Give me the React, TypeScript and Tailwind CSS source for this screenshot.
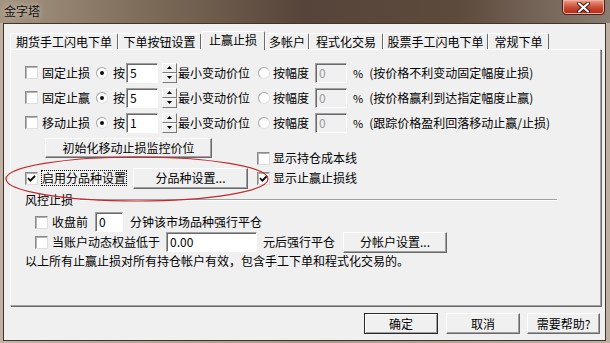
import React from 'react';

const Check: React.FC<{ checked?: boolean; className?: string }> = ({ checked, className = '' }) => (
  <span
    className={`flex h-[13px] w-[13px] shrink-0 items-center justify-center border border-t-[#8a8a8a] border-l-[#8a8a8a] border-b-[#dedede] border-r-[#dedede] bg-white shadow-[inset_1px_1px_0_#b4b4b4] ${className}`}
  >
    {checked && (
      <svg width="9" height="9" viewBox="0 0 9 9">
        <path d="M1 4.2 L3.4 6.6 L8 1.8" stroke="#000" strokeWidth="1.8" fill="none" />
      </svg>
    )}
  </span>
);

const Radio: React.FC<{ on?: boolean; className?: string }> = ({ on, className = '' }) => (
  <span
    className={`flex h-[12px] w-[12px] shrink-0 items-center justify-center rounded-full border border-[#a4a4a4] border-b-[#e2e2e2] border-r-[#e2e2e2] bg-white ${className}`}
  >
    {on && <span className="h-[4px] w-[4px] rounded-full bg-[#111]" />}
  </span>
);

const Field: React.FC<{ value: string; className?: string; disabled?: boolean }> = ({ value, className = '', disabled }) => (
  <span
    className={`flex h-[20px] shrink-0 items-center border border-t-[#a0a0a0] border-l-[#a0a0a0] border-b-white border-r-white pl-[3px] shadow-[inset_1px_1px_0_#696969] ${
      disabled ? 'bg-[#f0f0f0] text-[#9a9a9a]' : 'bg-white text-black'
    } ${className}`}
  >
    {value}
  </span>
);

const Spin: React.FC = () => (
  <span className="ml-[4px] flex h-[20px] w-[15px] shrink-0 flex-col">
    <span className="flex h-[10px] items-center justify-center border border-t-white border-l-white border-b-[#7a7a7a] border-r-[#7a7a7a] bg-[#f0f0f0]">
      <svg width="5" height="3" viewBox="0 0 5 3">
        <path d="M0 3h5L2.5 0z" fill="#000" />
      </svg>
    </span>
    <span className="flex h-[10px] items-center justify-center border border-t-white border-l-white border-b-[#7a7a7a] border-r-[#7a7a7a] bg-[#f0f0f0]">
      <svg width="5" height="3" viewBox="0 0 5 3">
        <path d="M0 0h5L2.5 3z" fill="#000" />
      </svg>
    </span>
  </span>
);

const Btn: React.FC<{ children: React.ReactNode; className?: string; primary?: boolean }> = ({ children, className = '', primary }) => (
  <span
    className={`flex shrink-0 items-center justify-center bg-[#f0f0f0] ${
      primary
        ? 'border border-[#2a2a2a] shadow-[inset_1px_1px_0_#fff,inset_-1px_-1px_0_#a0a0a0]'
        : 'border border-t-white border-l-white border-b-[#696969] border-r-[#696969] shadow-[inset_-1px_-1px_0_#a0a0a0]'
    } ${className}`}
  >
    {children}
  </span>
);

type StopRow = { label: string; value: string; note: string };

const stopRows: StopRow[] = [
  { label: '固定止损', value: '5', note: '(按价格不利变动固定幅度止损)' },
  { label: '固定止赢', value: '5', note: '(按价格赢利到达指定幅度止赢)' },
  { label: '移动止损', value: '1', note: '(跟踪价格盈利回落移动止赢/止损)' },
];

const tabs = [
  { label: '期货手工闪电下单', w: 'w-[108px]' },
  { label: '下单按钮设置', w: 'w-[83px]' },
  { label: '止赢止损', w: 'w-[64px]', active: true },
  { label: '多帐户', w: 'w-[44px]' },
  { label: '程式化交易', w: 'w-[74px]' },
  { label: '股票手工闪电下单', w: 'w-[105px]' },
  { label: '常规下单', w: 'w-[61px]' },
];

export default function App() {
  return (
    <div className="relative h-[343px] w-[610px] overflow-hidden bg-[linear-gradient(90deg,#c2b2a1,#ab9a88_50%,#bdb0a3)] font-['Noto_Sans_CJK_SC','Noto_Sans',sans-serif] text-[12px] leading-[16px] text-black">
      {/* title bar */}
      <div className="flex h-[23px] items-start justify-between bg-[linear-gradient(90deg,#a49482,#7c6a58_25%,#56443a_50%,#5c4a3c_75%,#8a7c70)]">
        <span className="pl-[4px] pt-[3px] text-[#111] [text-shadow:0_0_6px_#e8dccc]">金字塔</span>
        <span className="mr-[5px] mt-[-1px] flex h-[16px] w-[43px] items-center justify-center rounded-b-[4px] border border-[#4e1e16] bg-[linear-gradient(#eaa392,#cf4c34_50%,#a9291a)] shadow-[inset_0_0_0_1px_#f0b0a0]">
          <svg width="13" height="11" viewBox="0 0 13 11">
            <path d="M2 1.5 L11 9.5 M11 1.5 L2 9.5" stroke="#3a1410" strokeWidth="4" strokeLinecap="round" />
            <path d="M2 1.5 L11 9.5 M11 1.5 L2 9.5" stroke="#fff" strokeWidth="2.2" strokeLinecap="round" />
          </svg>
        </span>
      </div>

      {/* dialog body */}
      <div className="ml-[3px] h-[318px] w-[603px] border border-[#3e352d] bg-[#f0f0f0] pl-[6px] pt-[7px]">
        <div className="relative z-10 flex h-[18px] items-end">
          {tabs.map((t) =>
            t.active ? (
              <span
                key={t.label}
                className={`mb-[-1px] flex h-[19px] items-center justify-center rounded-t-[2px] border border-b-0 border-t-white border-l-white border-r-[#696969] bg-[#f0f0f0] pb-[2px] ${t.w}`}
              >
                {t.label}
              </span>
            ) : (
              <span
                key={t.label}
                className={`flex h-[16px] items-center justify-center rounded-t-[2px] border border-b-0 border-t-white border-l-white border-r-[#696969] bg-[#f0f0f0] ${t.w}`}
              >
                {t.label}
              </span>
            ),
          )}
        </div>

        <div className="h-[257px] w-[591px] border border-t-white border-l-white border-b-[#a0a0a0] border-r-[#a0a0a0] pl-[14px] pt-[10px] shadow-[1px_1px_0_#696969]">
          {stopRows.map((r) => (
            <div key={r.label} className="flex h-[25px] items-center whitespace-nowrap">
              <Check />
              <span className="ml-[4px] w-[48px]">{r.label}</span>
              <Radio on className="ml-[6px]" />
              <span className="ml-[5px] w-[12px]">按</span>
              <Field value={r.value} className="ml-[1px] w-[32px]" />
              <Spin />
              <span className="ml-[1px] w-[72px]">最小变动价位</span>
              <Radio className="ml-[8px]" />
              <span className="ml-[3px] w-[36px]">按幅度</span>
              <Field value="0" disabled className="ml-[6px] w-[32px]" />
              <span className="ml-[6px] text-[11px]">%</span>
              <span className="ml-[6px]">{r.note}</span>
            </div>
          ))}

          <div className="flex">
            <div className="w-[232px]">
              <Btn className="ml-[20px] mt-[3px] h-[20px] w-[167px]">初始化移动止损监控价位</Btn>
              <div className="mt-[9px] flex h-[22px] items-center whitespace-nowrap">
                <Check checked />
                <span className="ml-[3px] border border-dotted border-black leading-[14px]">启用分品种设置</span>
                <Btn className="ml-[6px] h-[21px] w-[115px]">分品种设置...</Btn>
              </div>
            </div>
            <div className="pt-[15px]">
              <div className="flex h-[16px] items-center">
                <Check />
                <span className="ml-[3px]">显示持仓成本线</span>
              </div>
              <div className="mt-[4px] flex h-[16px] items-center">
                <Check checked />
                <span className="ml-[3px]">显示止赢止损线</span>
              </div>
            </div>
          </div>

          <div className="mt-[3px] flex h-[16px] items-center">
            <span className="w-[48px]">风控止损</span>
            <span className="ml-[7px] w-[477px] border-t border-b border-t-[#a0a0a0] border-b-white" />
          </div>

          <div className="mt-[4px] flex h-[20px] items-center whitespace-nowrap pl-[10px]">
            <Check />
            <span className="ml-[4px] w-[36px]">收盘前</span>
            <Field value="0" className="ml-[7px] w-[28px]" />
            <span className="ml-[7px]">分钟该市场品种强行平仓</span>
          </div>
          <div className="flex h-[20px] items-center whitespace-nowrap pl-[10px]">
            <Check />
            <span className="ml-[4px] w-[108px]">当账户动态权益低于</span>
            <Field value="0.00" className="ml-[6px] w-[91px]" />
            <span className="ml-[6px] w-[72px]">元后强行平仓</span>
            <Btn className="ml-[8px] h-[21px] w-[104px]">分帐户设置...</Btn>
          </div>
          <div className="mt-[1px] flex h-[16px] items-center whitespace-nowrap">
            以上所有止赢止损对所有持仓帐户有效，包含手工下单和程式化交易的。
          </div>
        </div>

        <div className="ml-[354px] mt-[7px] flex">
          <Btn primary className="h-[21px] w-[74px]">确定</Btn>
          <Btn className="ml-[8px] h-[21px] w-[74px]">取消</Btn>
          <Btn className="ml-[7px] h-[21px] w-[73px]">需要帮助?</Btn>
        </div>
      </div>

      {/* hand-drawn red annotation */}
      <svg className="pointer-events-none absolute left-0 top-0" width="610" height="343" viewBox="0 0 610 343">
        <ellipse cx="137" cy="179" rx="131" ry="22" fill="none" stroke="#c4272c" strokeWidth="1.2" />
      </svg>
    </div>
  );
}
